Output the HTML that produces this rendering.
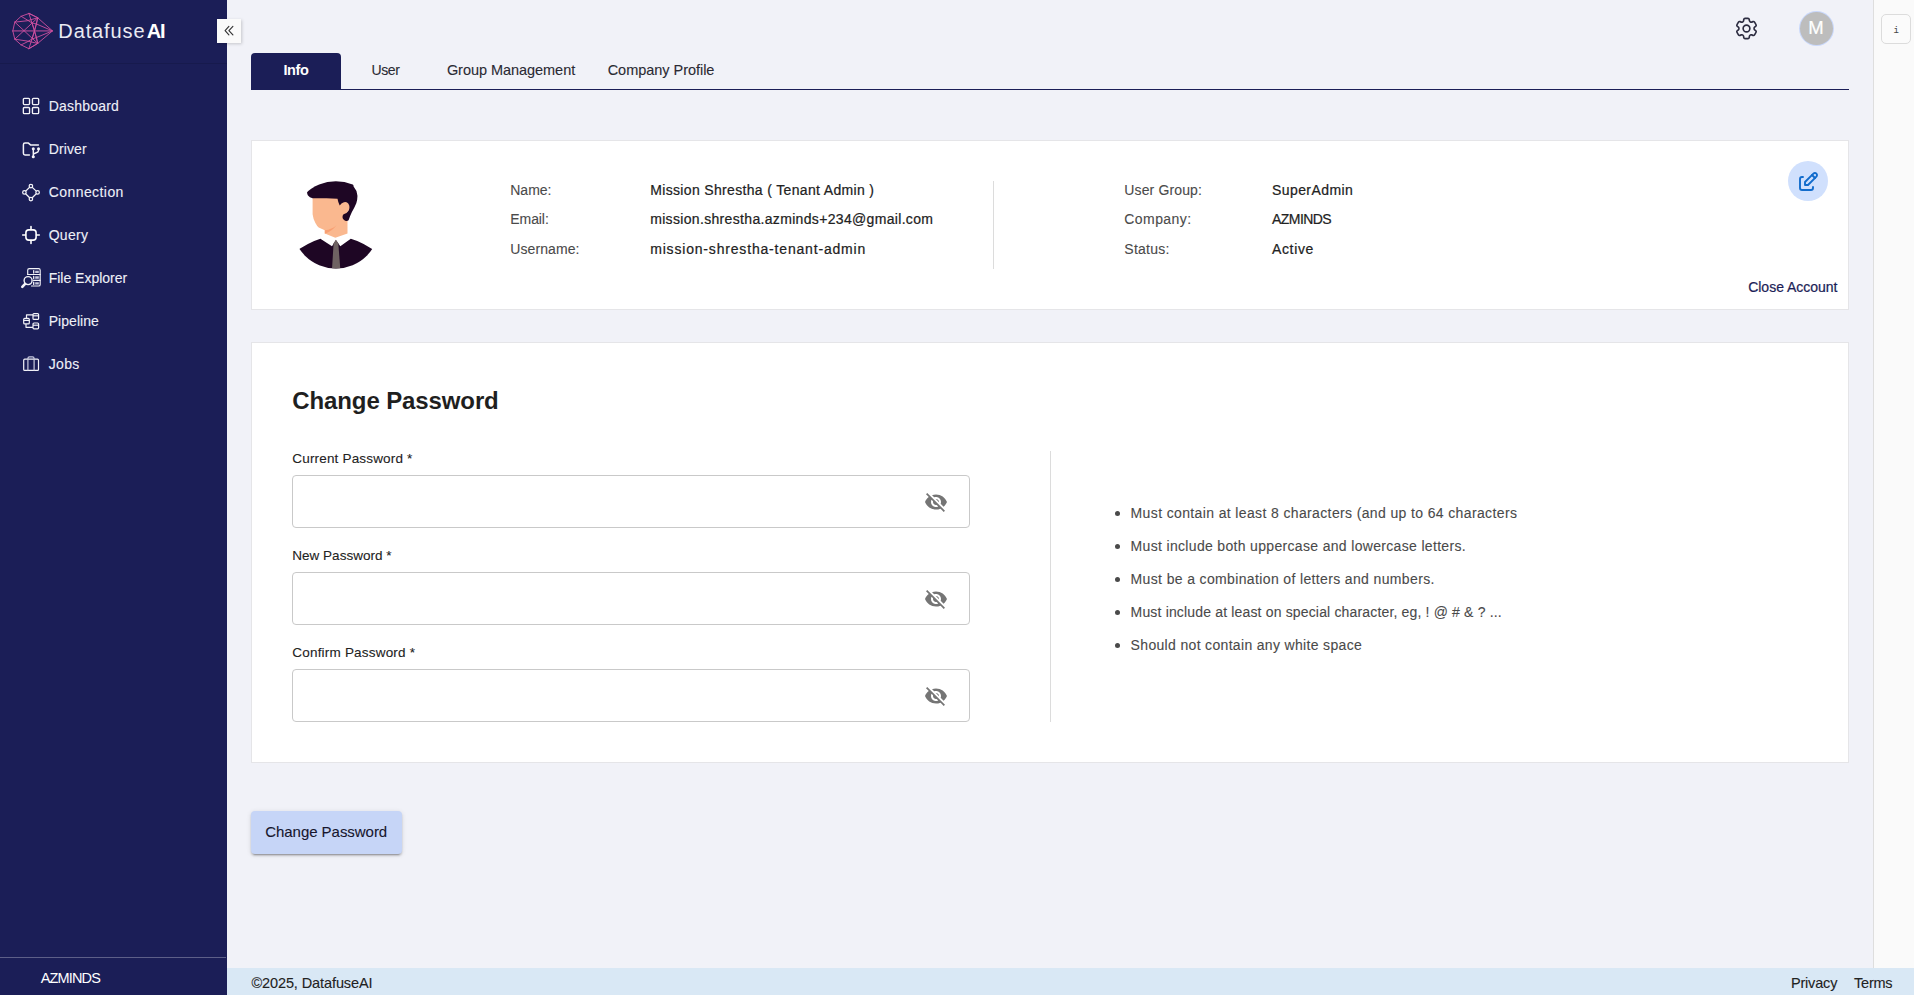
<!DOCTYPE html>
<html lang="en"><head><meta charset="utf-8"><title>DatafuseAI - Profile</title>
<style>
*{box-sizing:border-box}
html,body{margin:0;padding:0}
body{width:1914px;height:995px;overflow:hidden;position:relative;background:#f1f2f8;font-family:"Liberation Sans",sans-serif;color:#222}
.t{position:absolute;white-space:pre;margin:0;padding:0}
.val,.close,.av{-webkit-text-stroke:0.22px currentColor}
.nav,.lbl,.rule,.flabel,.foot,.btn-t,.tab{-webkit-text-stroke:0.1px currentColor}
ul,dl,dd,dt,li,h2,form{margin:0;padding:0;list-style:none;font-weight:400}
a{text-decoration:none}
input{outline:none;margin:0;padding:0 56px 0 14px;font:inherit}
button{border:0;padding:0;margin:0}
#sidebar{position:absolute;left:0;top:0;width:227px;height:995px;background:#1b1e57}
#sidebar .hdr-line{position:absolute;left:0;top:63px;width:227px;height:1px;background:#171a4d}
#sidebar .ft-line{position:absolute;left:0;top:957px;width:226px;height:1px;background:#5d5f88}
#collapse{position:absolute;left:217px;top:19px;width:24px;height:24px;background:#fafafa;box-shadow:1px 1px 3px rgba(0,0,0,.18)}
#tabs{position:absolute;left:251px;top:52px;width:1598px;height:38px;border-bottom:1px solid #1b1e57}
#tab-info{position:absolute;left:0;top:1px;width:90px;height:37px;background:#1b1e57;border-radius:4px 4px 0 0}
.card{position:absolute;background:#fff;border:1px solid #e5e5e8}
#card-info{left:251px;top:140px;width:1598px;height:170px}
#card-pw{left:251px;top:342px;width:1598px;height:421px}
.vline{position:absolute;width:1px;background:#dcdcdc}
.inp{position:absolute;left:292px;width:678px;height:53px;border:1px solid #c9c9c9;border-radius:4px;background:#fff}
.dot{position:absolute;width:5px;height:5px;border-radius:50%;background:#4a4a4a;left:1115px}
#btn{position:absolute;left:251px;top:811px;width:151px;height:43px;background:#c6d5f7;border-radius:4px;box-shadow:0 3px 1px -2px rgba(0,0,0,.2),0 2px 2px 0 rgba(0,0,0,.14),0 1px 5px 0 rgba(0,0,0,.12)}
#footer{position:absolute;left:227px;top:968px;width:1687px;height:27px;background:#d9e8f5}
#rpanel{position:absolute;left:1873px;top:0;width:41px;height:968px;background:#fafafa;border-left:1px solid #dedede}
#rbtn{position:absolute;left:1881px;top:14px;width:30px;height:30px;border:1px solid #dcdcdc;border-radius:5px;background:#fbfbfb}
#avatar{position:absolute;left:1799.5px;top:11.5px;width:33px;height:33px;border-radius:50%;background:#bdbdbd;box-shadow:0 0 0 1px #c9d8fb}
#editc{position:absolute;left:1788px;top:161px;width:40px;height:40px;border-radius:50%;background:#d0e0fd}
svg{position:absolute;overflow:visible}
</style></head>
<body>
<aside>
<div id="sidebar"><div class="hdr-line"></div><div class="ft-line"></div></div>
<div class="brand">
<svg style="left:6px;top:6px" width="54" height="50" viewBox="0 0 54 50" fill="none" stroke="#cf4f9f" stroke-width="0.9" stroke-linejoin="round" stroke-linecap="round">
<path d="M6.8 24.9H46" stroke="#7d3a80" stroke-width="1.9"/>
<path d="M22.9 7.5L15.1 10.3L8.8 16.1L6.8 24.9L8.8 33.2L15.1 38.9L22.9 42.7L31.7 37.4L46.5 24.9L31.7 11.8Z"/>
<path d="M8.8 16.1L31.7 37.4M8.8 33.2L31.7 11.8"/>
<path d="M22.9 7.5L26 17L28.5 24.9L26 33L22.9 42.7"/>
<path d="M31.7 11.8L30.5 18L46.5 24.9L30.5 31.5L31.7 37.4"/>
<path d="M15.1 10.3L21 13.8L26 17L30.5 18"/>
<path d="M15.1 38.9L21 36L26 33L30.5 31.5"/>
<path d="M8.8 16.1L21 14.8L31.7 11.8M8.8 33.2L21 35L31.7 37.4"/>
<path d="M22.9 7.5L31.7 11.8M22.9 42.7L31.7 37.4"/>
<path d="M31.7 11.8L28.5 24.9L31.7 37.4M30.5 18L26 33M30.5 31.5L26 17"/>
</svg>
<span class="t logo-a" style="left:58.3px;top:15.97px;font-size:20px;line-height:30px;font-weight:400;color:#e9eaf3;letter-spacing:0.891px">Datafuse</span>
<span class="t logo-b" style="left:146.8px;top:15.97px;font-size:20px;line-height:30px;font-weight:700;color:#ffffff;letter-spacing:-1.3px">AI</span>
</div>
<nav>

<svg style="left:16px;top:91px" width="30" height="30" viewBox="0 0 30 30" fill="none" stroke="#f3f3f8" stroke-width="1.35">
<rect x="7.35" y="7.35" width="6.2" height="6.2" rx="1"/><rect x="16.45" y="7.35" width="6.2" height="6.2" rx="1"/>
<rect x="7.35" y="16.45" width="6.2" height="6.2" rx="1"/><rect x="16.45" y="16.45" width="6.2" height="6.2" rx="1"/></svg>
<svg style="left:16px;top:136px" width="30" height="30" viewBox="0 0 30 30" fill="none" stroke="#f3f3f8" stroke-width="1.5" stroke-linecap="round" stroke-linejoin="round">
<path d="M13.400 18.900H9A1.600 1.600 0 0 1 7.400 17.300V8.700A1.600 1.600 0 0 1 9 7.100H12.400L14.500 8.900H22.400"/>
<path d="M17.300 12.800V20.800M22.500 12.800V14.800C22.500 17.300 17.300 16.700 17.300 18.800" stroke-width="1.450"/>
<circle cx="17.300" cy="12.800" r="1.500" fill="#f3f3f8" stroke="none"/><circle cx="22.500" cy="12.800" r="1.500" fill="#f3f3f8" stroke="none"/><circle cx="17.300" cy="20.800" r="1.550" fill="#f3f3f8" stroke="none"/></svg>
<svg style="left:16px;top:177px" width="30" height="30" viewBox="0 0 30 30" fill="none" stroke="#f3f3f8" stroke-width="1.25">
<path d="M14.9 9L8.4 15.4L14.9 22L21.6 15.4Z"/>
<circle cx="14.9" cy="9" r="1.750" fill="#1b1e57"/><circle cx="8.4" cy="15.4" r="1.750" fill="#1b1e57"/><circle cx="21.6" cy="15.4" r="1.750" fill="#1b1e57"/><circle cx="14.9" cy="22" r="1.750" fill="#1b1e57"/></svg>
<svg style="left:16px;top:220px" width="30" height="30" viewBox="0 0 30 30" fill="none" stroke="#ffffff" stroke-width="1.600" stroke-linecap="round">
<rect x="9.900" y="9.900" width="10.200" height="10.200" rx="2.900"/>
<path d="M15 6.600V9.500M15 20.500V23.400M6.700 15H9.500M20.500 15H23.300"/></svg>
<svg style="left:16px;top:263px" width="30" height="30" viewBox="0 0 30 30" fill="none" stroke="#f3f3f8" stroke-width="1.15" stroke-linecap="round" stroke-linejoin="round">
<path d="M11.7 11.5V7.2A1.6 1.6 0 0 1 13.3 5.6H22.6A1.6 1.6 0 0 1 24.2 7.2V21.4A1.6 1.6 0 0 1 22.6 23H15.5"/>
<path d="M11.7 11.5H24.2M17.5 17.3H24.2"/>
<path d="M17.7 7.6V10M17.7 13.4V15.6M17.7 19.2V21.4" stroke-width="1.3"/>
<path d="M19.200 8.800H22.800M19.200 14.500H22.800M19.200 20.300H22.800" stroke-width="2.300" stroke="#c6c8dc" stroke-linecap="butt"/>
<circle cx="12.1" cy="17.6" r="4" stroke-width="1.4"/>
<path d="M9.1 20.9L6.3 23.8" stroke-width="2.6"/></svg>
<svg style="left:16px;top:306px" width="30" height="30" viewBox="0 0 30 30" fill="none" stroke="#f3f3f8" stroke-width="1.2" stroke-linejoin="round">
<rect x="7.7" y="12.3" width="5.6" height="5.6" rx="1"/><path d="M7.7 14.4H13.3"/>
<rect x="17" y="7.6" width="5.6" height="5.8" rx="1"/><path d="M17 9.8H22.6"/>
<rect x="17" y="17" width="5.6" height="5.8" rx="1"/><path d="M17 19.2H22.6"/>
<path d="M10.5 12.3V8.8H17M10 17.9V21.3H17"/></svg>
<svg style="left:16px;top:349px" width="30" height="30" viewBox="0 0 30 30" fill="none" stroke="#f3f3f8" stroke-width="1.2" stroke-linejoin="round">
<rect x="7.7" y="10.2" width="14.8" height="11.2" rx="1"/>
<path d="M11.9 21.4V9.4A1.6 1.6 0 0 1 13.5 7.8H16.5A1.6 1.6 0 0 1 18.1 9.4V21.4" stroke="#c9cbdf"/></svg>

<a class="t nav" style="left:48.7px;top:96.05px;font-size:14px;line-height:21px;font-weight:400;color:#eef0f7;letter-spacing:0.213px">Dashboard</a>
<a class="t nav" style="left:48.7px;top:139.05px;font-size:14px;line-height:21px;font-weight:400;color:#eef0f7;letter-spacing:0.131px">Driver</a>
<a class="t nav" style="left:48.7px;top:182.05px;font-size:14px;line-height:21px;font-weight:400;color:#eef0f7;letter-spacing:0.43px">Connection</a>
<a class="t nav" style="left:48.7px;top:225.05px;font-size:14px;line-height:21px;font-weight:400;color:#eef0f7;letter-spacing:0.294px">Query</a>
<a class="t nav" style="left:48.7px;top:268.05px;font-size:14px;line-height:21px;font-weight:400;color:#eef0f7;letter-spacing:-0.008px">File Explorer</a>
<a class="t nav" style="left:48.7px;top:311.05px;font-size:14px;line-height:21px;font-weight:400;color:#eef0f7;letter-spacing:0.053px">Pipeline</a>
<a class="t nav" style="left:48.7px;top:354.05px;font-size:14px;line-height:21px;font-weight:400;color:#eef0f7;letter-spacing:0.341px">Jobs</a>
</nav>
<span class="t tenant" style="left:40.8px;top:966.98px;font-size:14.5px;line-height:22px;font-weight:400;color:#ffffff;letter-spacing:-0.858px">AZMINDS</span>
</aside>
<div id="rpanel"></div>
<div id="rbtn"></div><span class="t" style="left:1893.4px;top:23.8px;font-family:'Liberation Mono',monospace;font-size:9px;line-height:14px;color:#444">i</span>
<header>
<div id="collapse"></div>
<svg style="left:209px;top:11px" width="40" height="40" viewBox="0 0 40 40" fill="none" stroke="#333" stroke-width="1.15" stroke-linecap="round" stroke-linejoin="round"><path d="M19.900 15.400L16.100 19.600L19.900 23.900M23.900 15.400L19.900 19.600L23.900 23.900"/></svg>
<svg style="left:1733.4px;top:14.7px" width="27" height="27" viewBox="0 0 24 24" fill="none" stroke="#2c2c40" stroke-width="1.45" stroke-linecap="round" stroke-linejoin="round"><path d="M9.594 3.940c.09-.542.56-.94 1.110-.94h2.593c.55 0 1.020.398 1.110.94l.213 1.281c.63.374.313.686.645.870.74.040.147.083.220.127.325.196.720.257 1.075.124l1.217-.456a1.125 1.125 0 0 1 1.370.49l1.296 2.247a1.125 1.125 0 0 1-.26 1.431l-1.003.827c-.293.241-.438.613-.430.992a7.723 7.723 0 0 1 0 .255c-.008.378.137.750.430.991l1.004.827c.424.350.534.955.260 1.430l-1.298 2.247a1.125 1.125 0 0 1-1.369.491l-1.217-.456c-.355-.133-.750-.072-1.076.124a6.470 6.470 0 0 1-.220.128c-.331.183-.581.495-.644.869l-.213 1.281c-.09.543-.56.940-1.110.940h-2.594c-.55 0-1.019-.398-1.110-.940l-.213-1.281c-.062-.374-.312-.686-.644-.870a6.520 6.520 0 0 1-.220-.127c-.325-.196-.720-.257-1.076-.124l-1.217.456a1.125 1.125 0 0 1-1.369-.490l-1.297-2.247a1.125 1.125 0 0 1 .260-1.431l1.004-.827c.292-.240.437-.613.430-.991a6.932 6.932 0 0 1 0-.255c.007-.380-.138-.751-.430-.992l-1.004-.827a1.125 1.125 0 0 1-.260-1.430l1.297-2.247a1.125 1.125 0 0 1 1.370-.491l1.216.456c.356.133.751.072 1.076-.124.072-.044.146-.086.220-.128.332-.183.582-.495.644-.869l.214-1.280Z"/><path d="M15 12a3 3 0 1 1-6 0 3 3 0 0 1 6 0Z"/></svg>
<div id="avatar"></div>
<span class="t av" style="left:1808.3px;top:14.39px;font-size:18.5px;line-height:28px;font-weight:400;color:#ffffff;letter-spacing:-0.222px">M</span>
</header>
<main>
<div id="tabs"><div id="tab-info"></div></div>
<div class="tablist">
<a class="t tab-active" style="left:283.4px;top:58.88px;font-size:14.5px;line-height:22px;font-weight:700;color:#ffffff;letter-spacing:-0.393px">Info</a>
<a class="t tab" style="left:371.4px;top:59.75px;font-size:14px;line-height:21px;font-weight:400;color:#2a2a33;letter-spacing:-0.354px">User</a>
<a class="t tab" style="left:446.9px;top:59.08px;font-size:14.5px;line-height:22px;font-weight:400;color:#2a2a33;letter-spacing:-0.045px">Group Management</a>
<a class="t tab" style="left:607.7px;top:59.08px;font-size:14.5px;line-height:22px;font-weight:400;color:#2a2a33;letter-spacing:-0.035px">Company Profile</a>
</div>
<section>
<div class="card" id="card-info"></div>
<svg style="left:280px;top:170px" width="120" height="110" viewBox="0 0 120 110">
<defs><clipPath id="avc"><circle cx="55.900" cy="54.900" r="43.700"/></clipPath></defs>
<g clip-path="url(#avc)">
<path d="M32.6 24V44.2Q33.4 50 35.4 53.100Q37 56.300 38.700 57.500L44.800 60.300V63.600L55.300 67.700L67.500 63.600V28H40Z" fill="#fab88f"/>
<path d="M44.800 60.300Q52 59.500 56.500 55.300Q52 61.500 44.800 63.800Z" fill="#f89f72"/>
<circle cx="65.300" cy="37.100" r="4.800" fill="#fab88f"/>
<path d="M27.100 21.400Q30 15.200 36.500 12.800Q44 9.600 53.100 9.200Q62 8.800 66.400 9.900Q71 10.800 72.500 12.800Q73.500 14.300 73.600 16.600Q77 20.500 77.400 25.400Q77.600 29.500 76.300 33.200Q74.500 37.500 71.900 42Q70 46 68.600 50.300Q67.500 51.200 65.800 50.900Q62.500 49.500 62.500 47Q62.600 45 63.600 44.200Q67 43.500 68.700 40.500Q70.500 36 68 33.200Q65 30.500 61.500 33.500L59.700 35.400Q58 32 57.500 28.800Q50 28 44.200 28.200L32.600 28.200Q29.500 27.500 28 25.400Q26.900 23.800 27.100 21.600Z" fill="#1e0624"/>
<path d="M12 84Q28 72.500 40.400 68.800L52 76.300L55.900 70L60.300 76.300L70.800 68.800Q84 72.500 99 84V100H12Z" fill="#1e0624"/>
<path d="M55.900 69.700L58.300 73.200L60.300 99H52L53.600 73.200Z" fill="#6e6262"/>
</g></svg>
<dl>
<dt class="t lbl" style="left:510.3px;top:179.65px;font-size:14px;line-height:21px;font-weight:400;color:#4a4a4a;letter-spacing:-0.034px">Name:</dt>
<dt class="t lbl" style="left:510.3px;top:208.75px;font-size:14px;line-height:21px;font-weight:400;color:#4a4a4a;letter-spacing:-0.081px">Email:</dt>
<dt class="t lbl" style="left:510.3px;top:238.75px;font-size:14px;line-height:21px;font-weight:400;color:#4a4a4a;letter-spacing:0.091px">Username:</dt>
<dt class="t lbl" style="left:1124.3px;top:179.65px;font-size:14px;line-height:21px;font-weight:400;color:#4a4a4a;letter-spacing:0.135px">User Group:</dt>
<dt class="t lbl" style="left:1124.3px;top:208.75px;font-size:14px;line-height:21px;font-weight:400;color:#4a4a4a;letter-spacing:0.427px">Company:</dt>
<dt class="t lbl" style="left:1124.3px;top:238.75px;font-size:14px;line-height:21px;font-weight:400;color:#4a4a4a;letter-spacing:0.268px">Status:</dt>
<dd class="t val" style="left:650.2px;top:179.65px;font-size:14px;line-height:21px;font-weight:400;color:#222222;letter-spacing:0.339px">Mission Shrestha ( Tenant Admin )</dd>
<dd class="t val" style="left:650.2px;top:208.75px;font-size:14px;line-height:21px;font-weight:400;color:#222222;letter-spacing:0.329px">mission.shrestha.azminds+234@gmail.com</dd>
<dd class="t val" style="left:650.2px;top:238.75px;font-size:14px;line-height:21px;font-weight:400;color:#222222;letter-spacing:0.818px">mission-shrestha-tenant-admin</dd>
<dd class="t val" style="left:1272.0px;top:179.65px;font-size:14px;line-height:21px;font-weight:400;color:#222222;letter-spacing:0.417px">SuperAdmin</dd>
<dd class="t val" style="left:1272.0px;top:208.75px;font-size:14px;line-height:21px;font-weight:400;color:#222222;letter-spacing:-0.55px">AZMINDS</dd>
<dd class="t val" style="left:1272.0px;top:238.75px;font-size:14px;line-height:21px;font-weight:400;color:#222222;letter-spacing:0.635px">Active</dd>
</dl>
<div class="vline" style="left:993px;top:181px;height:88px"></div>
<div id="editc"></div><svg style="left:1795.5px;top:169.5px" width="24" height="24" viewBox="0 0 24 24" fill="none" stroke="#126ccc" stroke-width="1.9" stroke-linecap="round" stroke-linejoin="round"><path d="M7 7h-1a2 2 0 0 0 -2 2v9a2 2 0 0 0 2 2h9a2 2 0 0 0 2 -2v-1"/><path d="M20.385 6.585a2.100 2.100 0 0 0 -2.970 -2.970l-8.415 8.385v3h3l8.385 -8.415z"/><path d="M16 5l3 3"/></svg>
<a class="t close" style="left:1748.2px;top:276.85px;font-size:14px;line-height:21px;font-weight:400;color:#1b1e57;letter-spacing:-0.017px">Close Account</a>
</section>
<section>
<div class="card" id="card-pw"></div>
<h2 class="t h" style="left:292.3px;top:383.08px;font-size:24px;line-height:36px;font-weight:700;color:#1f1f1f;letter-spacing:-0.112px">Change Password</h2>
<form>
<label class="t flabel" style="left:292.3px;top:448.62px;font-size:13.5px;line-height:20px;font-weight:400;color:#222;letter-spacing:0.174px">Current Password *</label>
<label class="t flabel" style="left:292.3px;top:545.62px;font-size:13.5px;line-height:20px;font-weight:400;color:#222;letter-spacing:0.012px">New Password *</label>
<label class="t flabel" style="left:292.3px;top:642.62px;font-size:13.5px;line-height:20px;font-weight:400;color:#222;letter-spacing:0.2px">Confirm Password *</label>
<input class="inp" type="password" style="top:475px"><svg style="left:924px;top:490px" width="24" height="24" viewBox="0 0 24 24" fill="#757575"><path d="M12 7c2.760 0 5 2.240 5 5 0 .65-.13 1.260-.36 1.830l2.920 2.920c1.510-1.260 2.700-2.890 3.430-4.750-1.730-4.390-6-7.500-11-7.500-1.400 0-2.740.25-3.980.7l2.160 2.160C10.740 7.130 11.350 7 12 7zM2 4.270l2.280 2.280.46.46C3.080 8.300 1.780 10.020 1 12c1.730 4.390 6 7.500 11 7.500 1.550 0 3.030-.3 4.380-.84l.42.42L19.730 22 21 20.730 3.270 3 2 4.270zM7.530 9.800l1.550 1.550c-.05.21-.08.43-.08.65 0 1.660 1.340 3 3 3 .22 0 .44-.03.65-.08l1.550 1.550c-.67.33-1.410.53-2.200.53-2.760 0-5-2.240-5-5 0-.79.2-1.530.53-2.200zm4.310-.78l3.150 3.150.02-.16c0-1.660-1.340-3-3-3l-.17.010z"/></svg>
<input class="inp" type="password" style="top:572px"><svg style="left:924px;top:587px" width="24" height="24" viewBox="0 0 24 24" fill="#757575"><path d="M12 7c2.760 0 5 2.240 5 5 0 .65-.13 1.260-.36 1.830l2.920 2.920c1.510-1.260 2.700-2.890 3.430-4.750-1.730-4.390-6-7.500-11-7.500-1.400 0-2.740.25-3.980.7l2.160 2.160C10.740 7.130 11.350 7 12 7zM2 4.270l2.280 2.280.46.46C3.080 8.300 1.780 10.020 1 12c1.730 4.390 6 7.500 11 7.500 1.550 0 3.030-.3 4.380-.84l.42.42L19.730 22 21 20.730 3.270 3 2 4.270zM7.530 9.800l1.550 1.550c-.05.21-.08.43-.08.65 0 1.660 1.340 3 3 3 .22 0 .44-.03.65-.08l1.550 1.550c-.67.33-1.410.53-2.200.53-2.760 0-5-2.240-5-5 0-.79.2-1.530.53-2.200zm4.310-.78l3.150 3.150.02-.16c0-1.660-1.340-3-3-3l-.17.010z"/></svg>
<input class="inp" type="password" style="top:669px"><svg style="left:924px;top:684px" width="24" height="24" viewBox="0 0 24 24" fill="#757575"><path d="M12 7c2.760 0 5 2.240 5 5 0 .65-.13 1.260-.36 1.830l2.920 2.920c1.510-1.260 2.700-2.890 3.430-4.750-1.730-4.390-6-7.500-11-7.500-1.400 0-2.740.25-3.980.7l2.160 2.160C10.740 7.130 11.350 7 12 7zM2 4.270l2.280 2.280.46.46C3.080 8.300 1.780 10.020 1 12c1.730 4.390 6 7.500 11 7.500 1.550 0 3.030-.3 4.380-.84l.42.42L19.730 22 21 20.730 3.270 3 2 4.270zM7.530 9.800l1.550 1.550c-.05.21-.08.43-.08.65 0 1.660 1.340 3 3 3 .22 0 .44-.03.65-.08l1.550 1.550c-.67.33-1.410.53-2.200.53-2.760 0-5-2.240-5-5 0-.79.2-1.530.53-2.200zm4.310-.78l3.150 3.150.02-.16c0-1.660-1.340-3-3-3l-.17.010z"/></svg>
</form>
<div class="vline" style="left:1050px;top:451px;height:271px"></div>
<div class="dot" style="top:511px"></div><div class="dot" style="top:544px"></div><div class="dot" style="top:577px"></div><div class="dot" style="top:610px"></div><div class="dot" style="top:643px"></div>
<ul>
<li class="t rule" style="left:1130.6px;top:502.55px;font-size:14px;line-height:21px;font-weight:400;color:#4a4a4a;letter-spacing:0.368px">Must contain at least 8 characters (and up to 64 characters</li>
<li class="t rule" style="left:1130.6px;top:535.55px;font-size:14px;line-height:21px;font-weight:400;color:#4a4a4a;letter-spacing:0.327px">Must include both uppercase and lowercase letters.</li>
<li class="t rule" style="left:1130.6px;top:568.55px;font-size:14px;line-height:21px;font-weight:400;color:#4a4a4a;letter-spacing:0.361px">Must be a combination of letters and numbers.</li>
<li class="t rule" style="left:1130.6px;top:601.55px;font-size:14px;line-height:21px;font-weight:400;color:#4a4a4a;letter-spacing:0.163px">Must include at least on special character, eg, ! @ # &amp; ? ...</li>
<li class="t rule" style="left:1130.6px;top:634.55px;font-size:14px;line-height:21px;font-weight:400;color:#4a4a4a;letter-spacing:0.331px">Should not contain any white space</li>
</ul>
</section>
<button id="btn" type="button"></button>
<span class="t btn-t" style="left:265.2px;top:820.70px;font-size:15px;line-height:22px;font-weight:400;color:#16162e;letter-spacing:-0.041px">Change Password</span>
</main>
<footer>
<div id="footer"></div>
<span class="t foot" style="left:251.4px;top:971.78px;font-size:14.5px;line-height:22px;font-weight:400;color:#222;letter-spacing:-0.096px">©2025, DatafuseAI</span>
<span class="t foot" style="left:1790.9px;top:971.58px;font-size:14.5px;line-height:22px;font-weight:400;color:#222;letter-spacing:-0.174px">Privacy</span>
<span class="t foot" style="left:1854.1px;top:971.58px;font-size:14.5px;line-height:22px;font-weight:400;color:#222;letter-spacing:-0.246px">Terms</span>
</footer>
</body></html>
